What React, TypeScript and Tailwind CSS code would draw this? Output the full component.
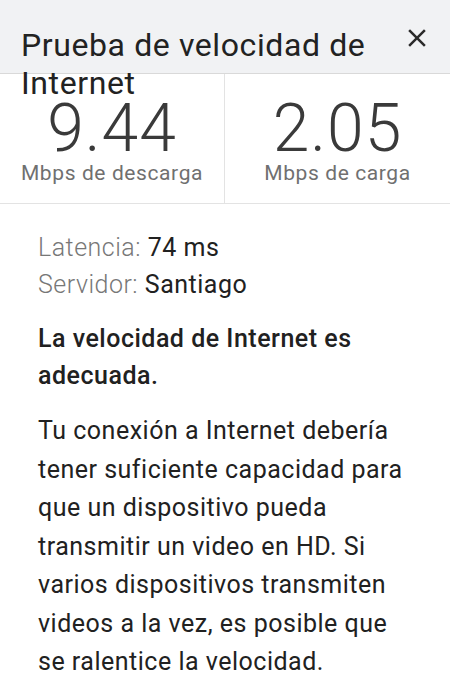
import React from "react";

function CloseIcon() {
  return (
    <svg width="30" height="30" viewBox="0 0 24 24" fill="#2a2a2a">
      <path d="M19 6.41L17.59 5 12 10.59 6.41 5 5 6.41 10.59 12 5 17.59 6.41 19 12 13.41 17.59 19 19 17.59 13.41 12z" />
    </svg>
  );
}

function Stat({ value, label, divider }: { value: string; label: string; divider?: boolean }) {
  return (
    <div
      className={`flex flex-col items-center pt-[24px] pb-[19px] ${
        divider ? "border-r border-[#e3e3e3]" : ""
      }`}
    >
      <div className="text-[66px] leading-[62px] font-light tracking-[1px] text-[#3a3a3a]">{value}</div>
      <div className="mt-[2px] text-[21px] leading-[22px] tracking-[0.6px] text-[#707070]">{label}</div>
    </div>
  );
}

export default function App() {
  return (
    <div className="w-[450px] min-h-[683px] bg-white text-[#212121]" style={{ fontFamily: "Roboto, sans-serif" }}>
      <header className="h-[74px] bg-[#f1f2f4] border-b border-[#d9d9d9] flex items-start pl-[21px] pr-[18px] pt-[26px]">
        <h1 className="flex-1 text-[32px] leading-[38px] tracking-[0.6px] font-normal text-[#222]">
          Prueba de velocidad de Internet
        </h1>
        <button className="shrink-0 -mt-[3px] ml-[20px]">
          <CloseIcon />
        </button>
      </header>

      <section className="grid grid-cols-2 border-b border-[#e3e3e3]">
        <Stat value="9.44" label="Mbps de descarga" divider />
        <Stat value="2.05" label="Mbps de carga" />
      </section>

      <section className="pl-[38px] pr-[34px] pt-[25px] text-[25px] tracking-[0.5px]">
        <div className="leading-[37px]">
          <p>
            <span className="font-light text-[#777]">Latencia:</span> 74 ms
          </p>
          <p>
            <span className="font-light text-[#777]">Servidor:</span> Santiago
          </p>
        </div>
        <p className="mt-[17px] leading-[37px] font-medium">La velocidad de Internet es adecuada.</p>
        <p className="mt-[18px] leading-[38.5px]">
          Tu conexión a Internet debería tener suficiente capacidad para que un dispositivo pueda
          transmitir un video en HD. Si varios dispositivos transmiten videos a la vez, es posible
          que se ralentice la velocidad.
        </p>
      </section>
    </div>
  );
}
